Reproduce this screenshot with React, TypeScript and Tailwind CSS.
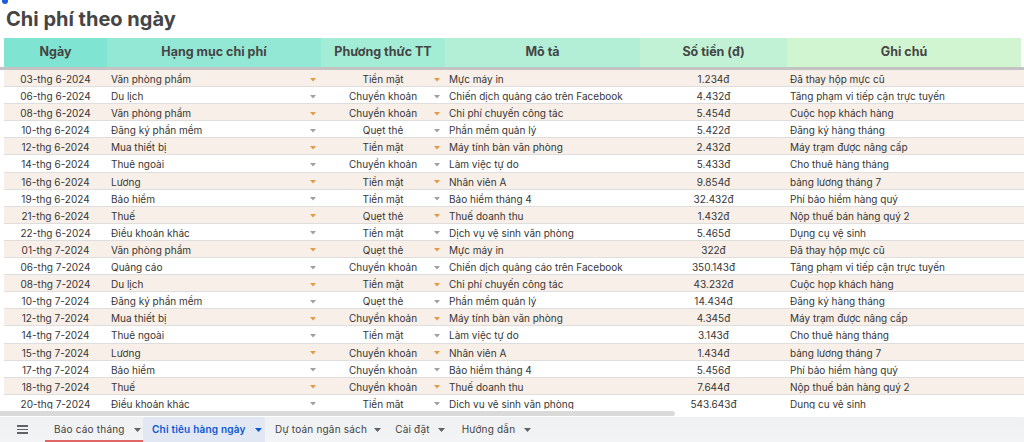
import React from 'react'

interface Expense {
  date: string
  category: string
  method: string
  desc: string
  amount: string
  note: string
}

const rows: Expense[] = [
  { date: '03-thg 6-2024', category: 'Văn phòng phẩm', method: 'Tiền mặt', desc: 'Mực máy in', amount: '1.234đ', note: 'Đã thay hộp mực cũ' },
  { date: '06-thg 6-2024', category: 'Du lịch', method: 'Chuyển khoản', desc: 'Chiến dịch quảng cáo trên Facebook', amount: '4.432đ', note: 'Tăng phạm vi tiếp cận trực tuyến' },
  { date: '08-thg 6-2024', category: 'Văn phòng phẩm', method: 'Chuyển khoản', desc: 'Chi phí chuyến công tác', amount: '5.454đ', note: 'Cuộc họp khách hàng' },
  { date: '10-thg 6-2024', category: 'Đăng ký phần mềm', method: 'Quẹt thẻ', desc: 'Phần mềm quản lý', amount: '5.422đ', note: 'Đăng ký hàng tháng' },
  { date: '12-thg 6-2024', category: 'Mua thiết bị', method: 'Tiền mặt', desc: 'Máy tính bàn văn phòng', amount: '2.432đ', note: 'Máy trạm được nâng cấp' },
  { date: '14-thg 6-2024', category: 'Thuê ngoài', method: 'Chuyển khoản', desc: 'Làm việc tự do', amount: '5.433đ', note: 'Cho thuê hàng tháng' },
  { date: '16-thg 6-2024', category: 'Lương', method: 'Tiền mặt', desc: 'Nhân viên A', amount: '9.854đ', note: 'bảng lương tháng 7' },
  { date: '19-thg 6-2024', category: 'Bảo hiểm', method: 'Tiền mặt', desc: 'Bảo hiểm tháng 4', amount: '32.432đ', note: 'Phí bảo hiểm hàng quý' },
  { date: '21-thg 6-2024', category: 'Thuế', method: 'Quẹt thẻ', desc: 'Thuế doanh thu', amount: '1.432đ', note: 'Nộp thuế bán hàng quý 2' },
  { date: '22-thg 6-2024', category: 'Điều khoản khác', method: 'Tiền mặt', desc: 'Dịch vụ vệ sinh văn phòng', amount: '5.465đ', note: 'Dụng cụ vệ sinh' },
  { date: '01-thg 7-2024', category: 'Văn phòng phẩm', method: 'Quẹt thẻ', desc: 'Mực máy in', amount: '322đ', note: 'Đã thay hộp mực cũ' },
  { date: '06-thg 7-2024', category: 'Quảng cáo', method: 'Chuyển khoản', desc: 'Chiến dịch quảng cáo trên Facebook', amount: '350.143đ', note: 'Tăng phạm vi tiếp cận trực tuyến' },
  { date: '08-thg 7-2024', category: 'Du lịch', method: 'Tiền mặt', desc: 'Chi phí chuyến công tác', amount: '43.232đ', note: 'Cuộc họp khách hàng' },
  { date: '10-thg 7-2024', category: 'Đăng ký phần mềm', method: 'Quẹt thẻ', desc: 'Phần mềm quản lý', amount: '14.434đ', note: 'Đăng ký hàng tháng' },
  { date: '12-thg 7-2024', category: 'Mua thiết bị', method: 'Chuyển khoản', desc: 'Máy tính bàn văn phòng', amount: '4.345đ', note: 'Máy trạm được nâng cấp' },
  { date: '14-thg 7-2024', category: 'Thuê ngoài', method: 'Tiền mặt', desc: 'Làm việc tự do', amount: '3.143đ', note: 'Cho thuê hàng tháng' },
  { date: '15-thg 7-2024', category: 'Lương', method: 'Chuyển khoản', desc: 'Nhân viên A', amount: '1.434đ', note: 'bảng lương tháng 7' },
  { date: '17-thg 7-2024', category: 'Bảo hiểm', method: 'Chuyển khoản', desc: 'Bảo hiểm tháng 4', amount: '5.456đ', note: 'Phí bảo hiểm hàng quý' },
  { date: '18-thg 7-2024', category: 'Thuế', method: 'Chuyển khoản', desc: 'Thuế doanh thu', amount: '7.644đ', note: 'Nộp thuế bán hàng quý 2' },
  { date: '20-thg 7-2024', category: 'Điều khoản khác', method: 'Tiền mặt', desc: 'Dịch vụ vệ sinh văn phòng', amount: '543.643đ', note: 'Dụng cụ vệ sinh' },
]

const Caret = ({ color }: { color: string }) => (
  <svg width="6" height="4" viewBox="0 0 6 4" className="shrink-0">
    <path d="M0 0h6L3 3.5z" fill={color} />
  </svg>
)

const TabCaret = ({ color = '#5f6368' }: { color?: string }) => (
  <svg width="7" height="4" viewBox="0 0 7 4" className="shrink-0">
    <path d="M0 0h7L3.5 4z" fill={color} />
  </svg>
)

const cols = 'grid grid-cols-[103px_214px_124px_195px_147px_234px]'

export default function App() {
  return (
    <div className="relative flex h-[442px] w-[1024px] flex-col overflow-hidden bg-white font-['Inter',sans-serif] text-[#3a3a3a]">
      <span className="absolute -top-[2px] left-[2px] h-[6px] w-[6px] rounded-full bg-[#1a5fe0]" />

      {/* Title */}
      <div className="flex h-[38px] shrink-0 items-center pl-[6px]">
        <h1 className="text-[20px] font-bold text-[#454545]">Chi phí theo ngày</h1>
      </div>

      {/* Header */}
      <div className={`${cols} ml-[4px] h-[29px] shrink-0 text-[12.5px] font-bold text-[#454545]`}>
        <div className="flex items-center justify-center bg-[#7fe4d2]">Ngày</div>
        <div className="flex items-center justify-center bg-[#92e8d5]">Hạng mục chi phí</div>
        <div className="flex items-center justify-center bg-[#a3ecd6]">Phương thức TT</div>
        <div className="flex items-center justify-center bg-[#b2efd6]">Mô tả</div>
        <div className="flex items-center justify-center bg-[#c1f2d6]">Số tiền (đ)</div>
        <div className="flex items-center justify-center bg-[#d2f5d1]">Ghi chú</div>
      </div>
      <div className="h-[3px] w-full shrink-0 bg-[#c3c3c3]" />

      {/* Rows */}
      <div className="min-h-0 flex-1 overflow-hidden text-[10px] text-[#363636]">
        {rows.map((r, i) => {
          const odd = i % 2 === 0
          const caret = odd ? '#e39a45' : '#a0a0a0'
          return (
            <div
              key={i}
              className={`${cols} ml-[4px] h-[17.1px] border-b border-[#dedede] pt-[2px] ${odd ? 'bg-[#f7efe8]' : 'bg-white'}`}
            >
              <div className="flex items-center justify-center">{r.date}</div>
              <div className="flex items-center justify-between pl-[4px] pr-[5px]">
                <span>{r.category}</span>
                <Caret color={caret} />
              </div>
              <div className="flex items-center pl-[11px] pr-[5px]">
                <span className="flex-1 text-center">{r.method}</span>
                <Caret color={caret} />
              </div>
              <div className="flex items-center pl-[4px]">{r.desc}</div>
              <div className="flex items-center justify-center">{r.amount}</div>
              <div className="flex items-center pl-[3px]">{r.note}</div>
            </div>
          )
        })}
      </div>

      {/* Horizontal scrollbar */}
      <div className="flex h-[8px] shrink-0 items-center bg-white">
        <div className="h-[5px] w-[675px] rounded-r-full bg-[#dadada]" />
      </div>

      {/* Sheet tabs */}
      <div className="flex h-[25px] shrink-0 items-stretch whitespace-nowrap bg-gradient-to-b from-[#eef0f1] to-[#f3f4f5] text-[10px] tracking-[0.2px] text-[#444]">
        <div className="flex w-[45px] shrink-0 items-center justify-center">
          <div className="flex w-[11px] flex-col gap-[2px]">
            <span className="h-[1.5px] bg-[#5f6368]" />
            <span className="h-[1.5px] bg-[#5f6368]" />
            <span className="h-[1.5px] bg-[#5f6368]" />
          </div>
        </div>
        <div className="relative flex w-[98px] shrink-0 items-center gap-[9px] pl-[9px]">
          <span>Báo cáo tháng</span>
          <TabCaret />
          <span className="absolute bottom-0 left-0 h-[2px] w-full bg-[#e06666]" />
        </div>
        <div className="flex w-[122px] shrink-0 items-center gap-[9px] bg-[#e1e8f4] pl-[9px] font-semibold text-[#0b57d0]">
          <span>Chi tiêu hàng ngày</span>
          <TabCaret color="#0b57d0" />
        </div>
        <div className="flex shrink-0 items-center gap-[7px] pl-[10px]">
          <span>Dự toán ngân sách</span>
          <TabCaret />
        </div>
        <div className="flex shrink-0 items-center gap-[8px] pl-[14px]">
          <span>Cài đặt</span>
          <TabCaret />
        </div>
        <div className="flex shrink-0 items-center gap-[9px] pl-[17px]">
          <span>Hướng dẫn</span>
          <TabCaret />
        </div>
      </div>
    </div>
  )
}
